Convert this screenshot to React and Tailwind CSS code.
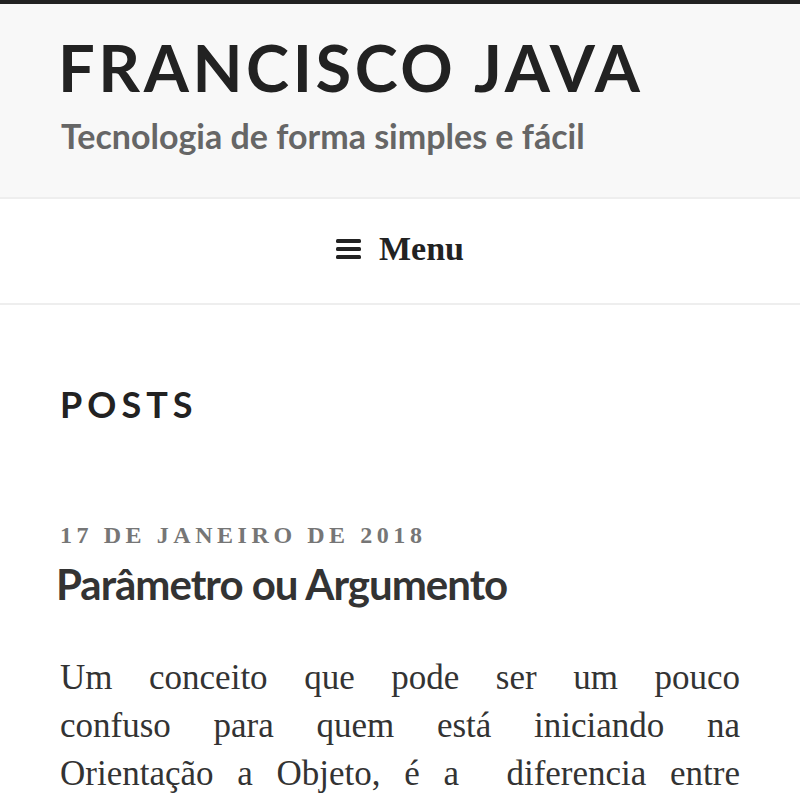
import React from 'react';

const lato = "font-['Lato','Liberation_Sans',sans-serif]";
const serif = "font-['Liberation_Serif','DejaVu_Serif',serif]";

const bodyLines = [
  'Um conceito que pode ser um pouco',
  'confuso para quem está iniciando na',
  'Orientação a Objeto, é a  diferencia entre',
];

function MenuIcon() {
  return (
    <svg width="25" height="20" viewBox="0 0 25 20" className="shrink-0">
      <rect x="0" y="0" width="25" height="4" rx="1.5" fill="#222" />
      <rect x="0" y="8" width="25" height="4" rx="1.5" fill="#222" />
      <rect x="0" y="16" width="25" height="4" rx="1.5" fill="#222" />
    </svg>
  );
}

export default function App() {
  return (
    <div className="w-[800px] h-[800px] overflow-hidden bg-white border-t-4 border-[#222]">
      {/* Site header */}
      <header className="bg-[#f8f8f8] border-b-2 border-[#eeeeee] pl-[58px] pt-[31px] pb-[44px]">
        <h1 className={`${lato} text-[65px] leading-[65px] font-bold uppercase tracking-[0.055em] text-[#222]`}>
          Francisco Java
        </h1>
        <p className={`${lato} mt-[19px] pl-[3px] text-[34px] leading-[34px] font-bold text-[#666]`}>
          Tecnologia de forma simples e fácil
        </p>
      </header>

      {/* Navigation */}
      <nav className="h-[106px] border-b-2 border-[#eeeeee] flex items-center justify-center">
        <button className="flex items-center gap-[18px] -mt-[4px]">
          <MenuIcon />
          <span className={`${serif} text-[34px] leading-[34px] font-bold text-[#222]`}>Menu</span>
        </button>
      </nav>

      {/* Content */}
      <main className="px-[60px]">
        <h2 className={`${lato} mt-[81px] text-[36px] leading-[36px] font-bold uppercase tracking-[0.14em] text-[#222]`}>
          Posts
        </h2>

        <article>
          <div className={`${serif} mt-[101px] text-[24px] leading-[24px] font-bold uppercase tracking-[0.19em] text-[#767676]`}>
            17 de janeiro de 2018
          </div>
          <h3 className={`${lato} mt-[16px] -ml-[4px] text-[42px] leading-[42px] font-bold tracking-[-0.024em] text-[#333]`}>
            Parâmetro ou Argumento
          </h3>
          <div className={`${serif} mt-[49px] text-[35px] leading-[48px] text-[#333]`}>
            {bodyLines.map((line, i) => (
              <div key={i} className="text-justify [text-align-last:justify] whitespace-pre">
                {line}
              </div>
            ))}
          </div>
        </article>
      </main>
    </div>
  );
}
